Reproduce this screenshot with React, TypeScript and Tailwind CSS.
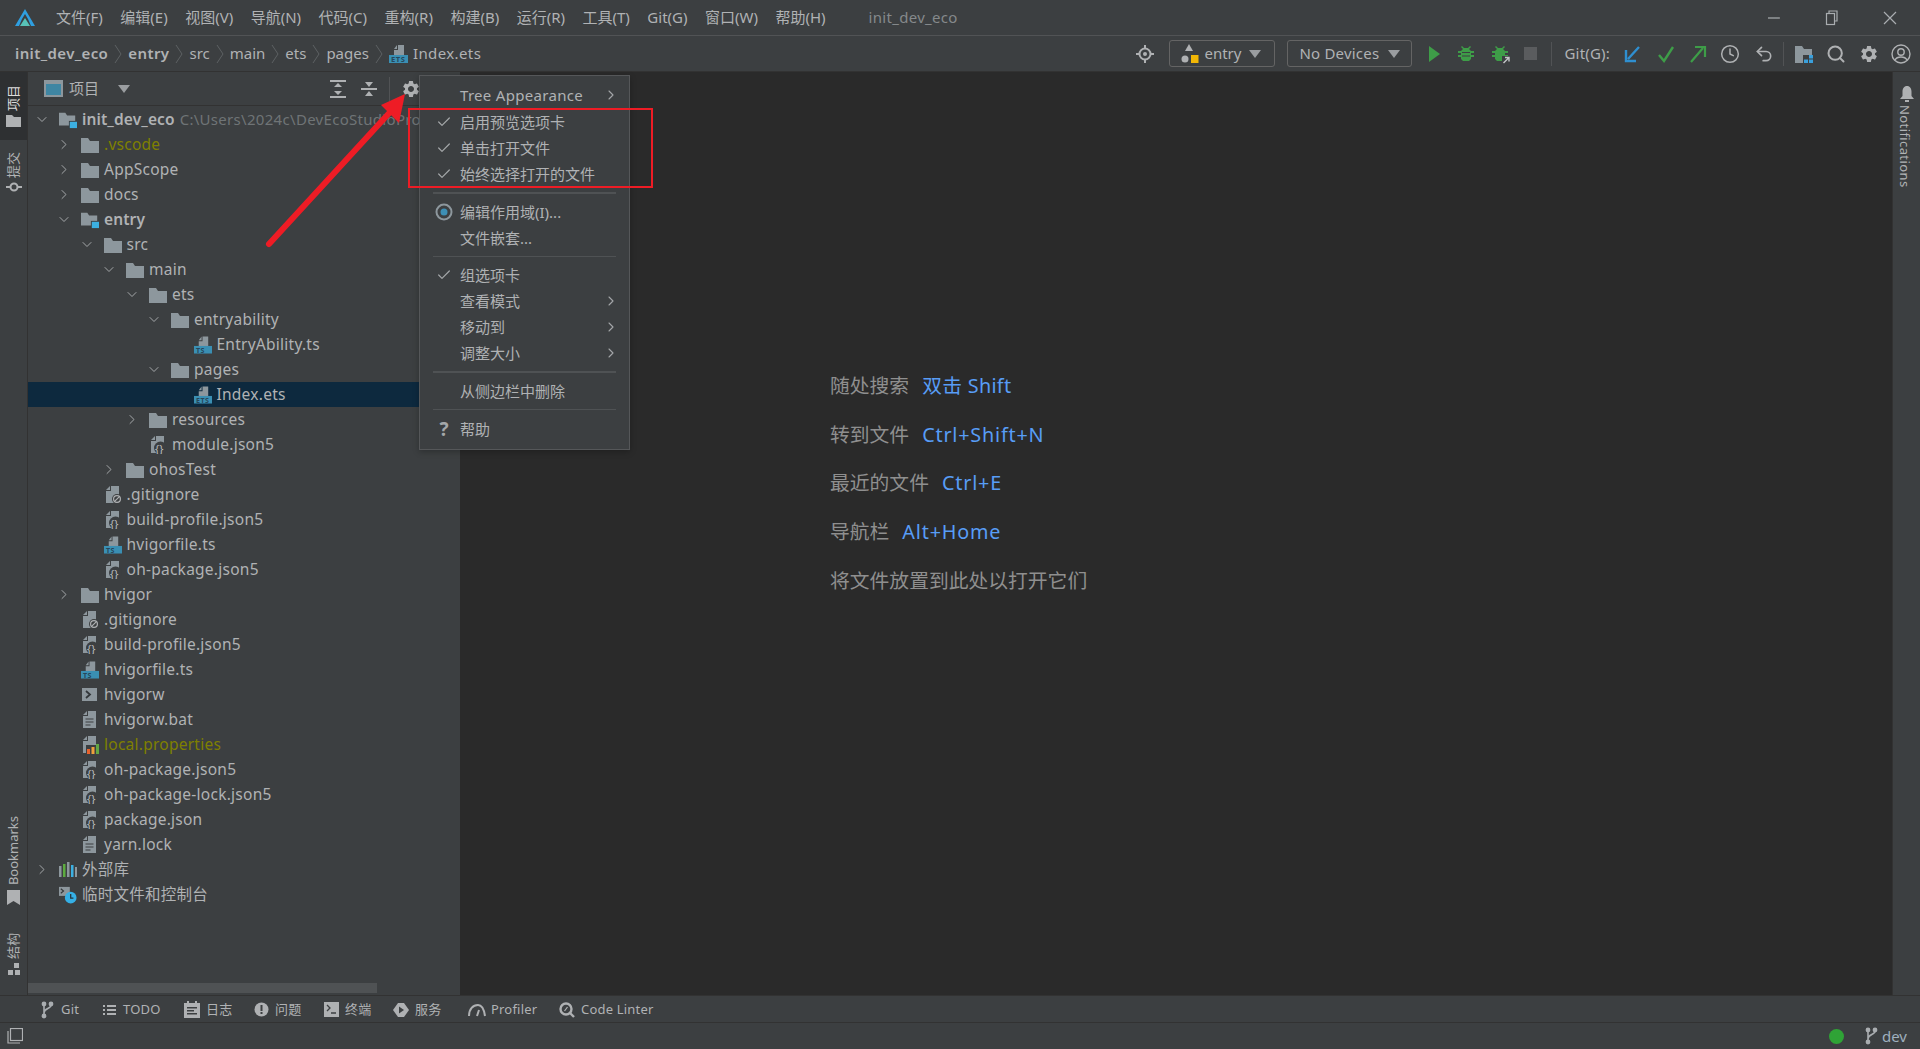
import { Check, ChevronDown, ChevronRight, Clock, Search, Undo2 } from 'lucide-react';
import { MdSettings } from 'react-icons/md';
import type { ReactNode } from 'react';

const FONT = "font-['Noto_Sans','Noto_Sans_CJK_SC',sans-serif]";
const GREY = '#8d979d';

const Folder = () => (
  <svg width="18" height="18" viewBox="0 0 18 18">
    <path d="M0 2h7l2 3h9v12H0z" fill={GREY} />
  </svg>
);

const ModuleFolder = () => (
  <svg width="20" height="18" viewBox="0 0 20 18">
    <path d="M0 1h7l2 3h9v11H0z" fill={GREY} />
    <rect x="11" y="10" width="9" height="8" fill="#3c3f41" />
    <rect x="12" y="11" width="8" height="7" fill="#3cb0e2" />
  </svg>
);

const FileBase = () => <path d="M7 0h8v17H2V5h5zM6 0v4H2z" fill={GREY} />;

const StripFile = ({ label }: { label: string }) => (
  <svg width="19" height="18" viewBox="0 0 19 18">
    <path d="M9 0h6v11H5V5h4zM8 0v4H5z" fill={GREY} />
    <rect x="0" y="10" width="19" height="8" fill="#3a8fb3" />
    <text x="2" y="17" fontSize="7.5" fontWeight="700" fontFamily="Noto Sans" fill="#27475a" letterSpacing="0.6">
      {label}
    </text>
  </svg>
);

const JsonFile = () => (
  <svg width="18" height="18" viewBox="0 0 18 18">
    <FileBase />
    <circle cx="11.500" cy="12" r="6.500" fill="#3c3f41" />
    <text x="6" y="16.500" fontSize="11" fontFamily="Noto Sans" fill="#b8babc">
      {'{}'}
    </text>
  </svg>
);

const IgnoreFile = () => (
  <svg width="18" height="18" viewBox="0 0 18 18">
    <FileBase />
    <circle cx="13" cy="13" r="5" fill="#3c3f41" />
    <circle cx="13" cy="13" r="3.4" fill="none" stroke="#afb1b3" strokeWidth="1.2" />
    <path d="M10.8 15.2l4.4-4.4" stroke="#afb1b3" strokeWidth="1.2" />
  </svg>
);

const TermFile = () => (
  <svg width="18" height="18" viewBox="0 0 18 18">
    <rect x="1" y="2" width="15" height="13" fill={GREY} />
    <path d="M5 5l4 3.5L5 12" fill="none" stroke="#33373a" strokeWidth="1.8" />
  </svg>
);

const TextFile = () => (
  <svg width="18" height="18" viewBox="0 0 18 18">
    <FileBase />
    <path d="M4.500 8h8M4.500 11h8M4.500 14h5" stroke="#3c3f41" strokeWidth="1.2" />
  </svg>
);

const PropsFile = () => (
  <svg width="18" height="18" viewBox="0 0 18 18">
    <FileBase />
    <rect x="5" y="9" width="13" height="9" fill="#3c3f41" />
    <rect x="6" y="13" width="3" height="5" fill="#e8622c" />
    <rect x="10.5" y="11" width="3" height="7" fill="#eda03c" />
    <rect x="15" y="8" width="3" height="10" fill="#62a744" />
  </svg>
);

const LibIcon = () => (
  <svg width="18" height="18" viewBox="0 0 18 18">
    <rect x="0" y="5" width="2.5" height="11" fill={GREY} />
    <rect x="4" y="3" width="2.5" height="13" fill="#5cab3f" />
    <rect x="8" y="1" width="2.5" height="15" fill={GREY} />
    <rect x="12" y="4" width="2.5" height="12" fill="#3cb0e2" />
    <rect x="16" y="6" width="2" height="10" fill={GREY} />
  </svg>
);

const ScratchIcon = () => (
  <svg width="20" height="20" viewBox="0 0 20 20">
    <rect x="0" y="1" width="12" height="10" fill={GREY} />
    <path d="M2 3l3 2.5L2 8" fill="none" stroke="#33373a" strokeWidth="1.3" />
    <circle cx="13" cy="13" r="6.5" fill="#35b0e6" />
    <path d="M13 9v4.5h3" fill="none" stroke="#26323a" strokeWidth="1.4" />
  </svg>
);

const BranchIcon = ({ className = '#a9adb0' }: { className?: string }) => (
  <svg width="14" height="18" viewBox="0 0 14 18" fill="none" stroke={className} strokeWidth="1.6">
    <path d="M4 3v12M11 4c0 4-7 3-7 8" />
    <circle cx="4" cy="3" r="1.6" fill={className} />
    <circle cx="11" cy="3" r="1.6" fill={className} />
    <circle cx="4" cy="15" r="1.6" fill={className} />
  </svg>
);

type Kind = 'folder' | 'module' | 'ts' | 'ets' | 'json' | 'ignore' | 'term' | 'text' | 'props' | 'lib' | 'scratch';

const ICONS: Record<Kind, ReactNode> = {
  folder: <Folder />,
  module: <ModuleFolder />,
  ts: <StripFile label="TS" />,
  ets: <StripFile label="ETS" />,
  json: <JsonFile />,
  ignore: <IgnoreFile />,
  term: <TermFile />,
  text: <TextFile />,
  props: <PropsFile />,
  lib: <LibIcon />,
  scratch: <ScratchIcon />,
};

const INDENT = ['pl-[6px]', 'pl-[28px]', 'pl-[50.5px]', 'pl-[73px]', 'pl-[96px]', 'pl-[118px]', 'pl-[140.5px]'];

type Row = {
  depth: number;
  kind: Kind;
  name: string;
  arrow?: 'open' | 'closed';
  tone?: string;
  selected?: boolean;
  path?: string;
};

const ROWS: Row[] = [
  { depth: 0, kind: 'module', name: 'init_dev_eco', arrow: 'open', tone: 'font-semibold tracking-[0.1px]', path: 'C:\\Users\\2024c\\DevEcoStudioProjects\\init_dev_eco' },
  { depth: 1, kind: 'folder', name: '.vscode', arrow: 'closed', tone: 'text-[#7f7f00]' },
  { depth: 1, kind: 'folder', name: 'AppScope', arrow: 'closed' },
  { depth: 1, kind: 'folder', name: 'docs', arrow: 'closed' },
  { depth: 1, kind: 'module', name: 'entry', arrow: 'open', tone: 'font-semibold tracking-[0.1px]' },
  { depth: 2, kind: 'folder', name: 'src', arrow: 'open' },
  { depth: 3, kind: 'folder', name: 'main', arrow: 'open' },
  { depth: 4, kind: 'folder', name: 'ets', arrow: 'open' },
  { depth: 5, kind: 'folder', name: 'entryability', arrow: 'open' },
  { depth: 6, kind: 'ts', name: 'EntryAbility.ts' },
  { depth: 5, kind: 'folder', name: 'pages', arrow: 'open' },
  { depth: 6, kind: 'ets', name: 'Index.ets', selected: true },
  { depth: 4, kind: 'folder', name: 'resources', arrow: 'closed' },
  { depth: 4, kind: 'json', name: 'module.json5' },
  { depth: 3, kind: 'folder', name: 'ohosTest', arrow: 'closed' },
  { depth: 2, kind: 'ignore', name: '.gitignore' },
  { depth: 2, kind: 'json', name: 'build-profile.json5' },
  { depth: 2, kind: 'ts', name: 'hvigorfile.ts' },
  { depth: 2, kind: 'json', name: 'oh-package.json5' },
  { depth: 1, kind: 'folder', name: 'hvigor', arrow: 'closed' },
  { depth: 1, kind: 'ignore', name: '.gitignore' },
  { depth: 1, kind: 'json', name: 'build-profile.json5' },
  { depth: 1, kind: 'ts', name: 'hvigorfile.ts' },
  { depth: 1, kind: 'term', name: 'hvigorw' },
  { depth: 1, kind: 'text', name: 'hvigorw.bat' },
  { depth: 1, kind: 'props', name: 'local.properties', tone: 'text-[#7f7f00]' },
  { depth: 1, kind: 'json', name: 'oh-package.json5' },
  { depth: 1, kind: 'json', name: 'oh-package-lock.json5' },
  { depth: 1, kind: 'json', name: 'package.json' },
  { depth: 1, kind: 'text', name: 'yarn.lock' },
  { depth: 0, kind: 'lib', name: '外部库', arrow: 'closed' },
  { depth: 0, kind: 'scratch', name: '临时文件和控制台' },
];

const TreeRow = ({ row }: { row: Row }) => (
  <div className={`flex h-[25px] items-center whitespace-nowrap ${INDENT[row.depth]} ${row.selected ? 'bg-[#0d293e]' : ''}`}>
    <span className="flex w-4 shrink-0 justify-center text-[#a4a7a9]">
      {row.arrow === 'open' && <ChevronDown size={17} strokeWidth={1.5} />}
      {row.arrow === 'closed' && <ChevronRight size={17} strokeWidth={1.5} />}
    </span>
    <span className="ml-[9px] flex w-[18px] shrink-0 items-center">{ICONS[row.kind]}</span>
    <span className={`ml-[5px] text-[15.5px] ${row.tone?.includes('tracking') ? '' : 'tracking-[0.25px]'} ${row.tone ?? ''}`}>{row.name}</span>
    {row.path && <span className="ml-[5px] tracking-[0.3px] text-[#6f7476]">{row.path}</span>}
  </div>
);

const MENUS = ['文件(F)', '编辑(E)', '视图(V)', '导航(N)', '代码(C)', '重构(R)', '构建(B)', '运行(R)', '工具(T)', 'Git(G)', '窗口(W)', '帮助(H)'];

const TitleBar = () => (
  <div className="flex h-[36px] items-center border-b border-[#515355] pl-[15px] pr-[23px]">
    <svg width="20" height="18" viewBox="0 0 20 18">
      <path d="M10 0l10 17h-6l-4-7-4 7H0z" fill="#2f9fe0" />
      <path d="M7 10l3-5 3 5 3 7H4z" fill="#3c3f41" />
      <path d="M10 9l5 8H5z" fill="#58c3b8" />
    </svg>
    <div className="ml-[21px] flex gap-[17.5px]">
      {MENUS.map((m) => (
        <span key={m} className="whitespace-nowrap">{m}</span>
      ))}
    </div>
    <span className="ml-[43px] text-[#85898b] tracking-[0.3px]">init_dev_eco</span>
    <div className="ml-auto flex items-center gap-[44px]">
      <svg width="14" height="14" viewBox="0 0 14 14"><path d="M1 7h12" stroke="#a9adb0" strokeWidth="1.2" /></svg>
      <svg width="14" height="16" viewBox="0 0 14 16" fill="none" stroke="#a9adb0" strokeWidth="1.2"><path d="M4 3V1h8v10h-2" /><rect x="1.5" y="3.5" width="8" height="11" /></svg>
      <svg width="14" height="14" viewBox="0 0 14 14"><path d="M1 1l12 12M13 1L1 13" stroke="#a9adb0" strokeWidth="1.2" /></svg>
    </div>
  </div>
);

const Crumb = ({ children, bold }: { children: ReactNode; bold?: boolean }) => (
  <>
    <span className={bold ? 'font-semibold tracking-[0.4px]' : ''}>{children}</span>
    <svg width="10" height="22" viewBox="0 0 10 22" className="mx-[5px]">
      <path d="M2 2l6 9-6 9" fill="none" stroke="#5d6163" strokeWidth="1" />
    </svg>
  </>
);

const Tri = () => (
  <svg width="12" height="8" viewBox="0 0 12 8"><path d="M0 0h12L6 8z" fill="#9a9da0" /></svg>
);

const Gear = ({ size = 20 }: { size?: number }) => <MdSettings size={size} color="#afb1b3" />;

const BugIcon = ({ attach }: { attach?: boolean }) => (
  <svg width="20" height="20" viewBox="0 0 20 20">
    <path d="M6 2l2 2h4l2-2 1 1-2 2 2 2h3v2h-3v2h3v2h-3v2l-2 2H7l-2-2v-2H2v-2h3V9H2V7h3l2-2-2-2z" fill="#3e9d48" />
    {!attach && <path d="M6 8.5h8M6 12h8" stroke="#3c3f41" strokeWidth="1.2" />}
    {attach && <path d="M12 12h8v8h-8z" fill="#3c3f41" />}
    {attach && <path d="M13.5 19l5-5M15 13.5h4v4" fill="none" stroke="#c4c6c8" strokeWidth="1.4" />}
  </svg>
);

const ArrowIcon = ({ dir }: { dir: 'in' | 'out' }) =>
  dir === 'in' ? (
    <svg width="20" height="20" viewBox="0 0 20 20" fill="none" stroke="#2f8fd0" strokeWidth="2.4">
      <path d="M17 3L6 15M4 6v11h10" />
    </svg>
  ) : (
    <svg width="20" height="20" viewBox="0 0 20 20" fill="none" stroke="#3e9d48" strokeWidth="2.2">
      <path d="M3 18L15 4M7 3h10v10" />
    </svg>
  );

const Breadcrumb = () => (
  <div className="flex h-[36px] items-center border-b border-[#323232] pl-[15px]">
    <Crumb bold>init_dev_eco</Crumb>
    <Crumb bold>entry</Crumb>
    <Crumb>src</Crumb>
    <Crumb>main</Crumb>
    <Crumb>ets</Crumb>
    <Crumb>pages</Crumb>
    <span className="flex items-center">
      <StripFile label="ETS" />
      <span className="ml-[5px] tracking-[0.4px]">Index.ets</span>
    </span>

    <div className="ml-auto flex items-center">
      <svg width="18" height="18" viewBox="0 0 18 18" fill="none" stroke="#afb1b3" strokeWidth="2">
        <circle cx="9" cy="9" r="5.5" />
        <circle cx="9" cy="9" r="2" fill="#afb1b3" stroke="none" />
        <path d="M9 0v3M9 15v3M0 9h3M15 9h3" />
      </svg>
      <div className="ml-[15px] flex h-[27px] w-[106px] items-center rounded-[3px] border border-[#646464] pl-[11px]">
        <svg width="18" height="20" viewBox="0 0 18 20">
          <path d="M8 0l4 7H4z" fill="#afb1b3" />
          <circle cx="4" cy="15" r="3.5" fill="#afb1b3" />
          <rect x="10" y="11" width="7.5" height="8" fill="#f2b705" />
        </svg>
        <span className="ml-[5px]">entry</span>
        <span className="ml-[8px]"><Tri /></span>
      </div>
      <div className="ml-[12px] flex h-[27px] w-[125px] items-center rounded-[3px] border border-[#646464] pl-[11px]">
        <span className="whitespace-nowrap tracking-[0.2px]">No Devices</span>
        <span className="ml-[9px]"><Tri /></span>
      </div>
      <svg className="ml-[12px]" width="20" height="20" viewBox="0 0 20 20"><path d="M5 2l11 8-11 8z" fill="#3e9d48" /></svg>
      <span className="ml-[12px]"><BugIcon /></span>
      <span className="ml-[14px]"><BugIcon attach /></span>
      <svg className="ml-[11px]" width="20" height="20" viewBox="0 0 20 20"><rect x="3" y="3" width="13" height="13" fill="#5a5c5e" /></svg>
      <span className="ml-[10px] h-[24px] w-px bg-[#515355]" />
      <span className="ml-[12px] whitespace-nowrap tracking-[0.2px]">Git(G):</span>
      <span className="ml-[12px]"><ArrowIcon dir="in" /></span>
      <svg className="ml-[14px]" width="20" height="20" viewBox="0 0 20 20" fill="none" stroke="#3e9d48" strokeWidth="2.4"><path d="M3 11l5 6L17 3" /></svg>
      <span className="ml-[12px]"><ArrowIcon dir="out" /></span>
      <Clock className="ml-[12px]" size={20} color="#afb1b3" strokeWidth={1.8} />
      <Undo2 className="ml-[14px]" size={20} color="#afb1b3" strokeWidth={2} />
      <span className="ml-[9px] h-[24px] w-px bg-[#515355]" />
      <svg className="ml-[10px]" width="20" height="20" viewBox="0 0 20 20">
        <path d="M1 2h7l2 3h8v14H1z" fill={GREY} />
        <rect x="9" y="11" width="11" height="9" fill="#3c3f41" />
        <rect x="15" y="11" width="4" height="3.5" fill="#3aa0dc" />
        <rect x="10" y="15.5" width="4" height="3.5" fill="#3aa0dc" />
        <rect x="15" y="15.5" width="4" height="3.5" fill="#3aa0dc" />
      </svg>
      <Search className="ml-[12px]" size={20} color="#afb1b3" strokeWidth={2.4} />
      <span className="ml-[13px]"><Gear /></span>
      <svg className="ml-[12px] mr-[9px]" width="20" height="20" viewBox="0 0 20 20" fill="none" stroke="#afb1b3" strokeWidth="1.4">
        <circle cx="10" cy="10" r="9" />
        <circle cx="10" cy="8" r="3.2" />
        <path d="M4 16c2-4 10-4 12 0" />
      </svg>
    </div>
  </div>
);

const SIDE_TEXT = 'rotate-180 [writing-mode:vertical-rl] [text-orientation:sideways]';

const LeftStripe = () => (
  <div className="flex w-[28px] shrink-0 flex-col justify-between border-r border-[#323232] text-[13px]">
    <div>
      <div className="flex h-[68px] flex-col items-center justify-center gap-[3px] bg-[#2e3032] text-[#dcdcdc]">
        <span className={SIDE_TEXT}>项目</span>
        <svg width="15" height="13" viewBox="0 0 15 13"><path d="M0 1h6l2 2h7v10H0z" fill="#afb1b3" /></svg>
      </div>
      <div className="mt-[12px] flex flex-col items-center gap-[3px]">
        <span className={SIDE_TEXT}>提交</span>
        <svg width="16" height="12" viewBox="0 0 16 12" fill="none" stroke="#afb1b3" strokeWidth="2">
          <circle cx="8" cy="6" r="3.5" />
          <path d="M0 6h4M12 6h4" />
        </svg>
      </div>
    </div>
    <div className="mb-[19px] flex flex-col items-center">
      <span className={SIDE_TEXT}>Bookmarks</span>
      <svg className="mt-[5px]" width="13" height="15" viewBox="0 0 13 15"><path d="M0 0h13v15l-6.5-4L0 15z" fill="#afb1b3" /></svg>
      <span className={`mt-[28px] ${SIDE_TEXT}`}>结构</span>
      <svg className="mt-[4px]" width="14" height="13" viewBox="0 0 14 13" fill="#afb1b3">
        <rect x="7" y="0" width="5" height="5" />
        <rect x="1" y="7" width="5" height="5" />
        <rect x="8" y="7" width="5" height="5" />
      </svg>
    </div>
  </div>
);

const Sidebar = () => (
  <div className="relative w-[432px] shrink-0 overflow-hidden">
    <div className="flex h-[34px] items-center border-b border-[#323232] pl-[16px]">
      <svg width="19" height="17" viewBox="0 0 19 17">
        <rect x="0" y="0" width="19" height="17" fill="#8d979d" />
        <rect x="2" y="4" width="15" height="11" fill="#3f86a3" />
      </svg>
      <span className="ml-[6px]">项目</span>
      <svg className="ml-[19px]" width="12" height="8" viewBox="0 0 12 8"><path d="M0 0h12L6 8z" fill="#9a9da0" /></svg>
      <svg className="ml-[200px]" width="16" height="18" viewBox="0 0 16 18" fill="#afb1b3">
        <rect x="0" y="0" width="16" height="2" />
        <rect x="0" y="16" width="16" height="2" />
        <path d="M8 3l4 4H4zM8 15l-4-4h8z" />
      </svg>
      <svg className="ml-[15px]" width="16" height="16" viewBox="0 0 16 16" fill="#afb1b3">
        <rect x="0" y="7" width="16" height="2" />
        <path d="M8 6L4 1h8zM8 10l4 5H4z" />
      </svg>
      <span className="ml-[12px] h-[24px] w-px bg-[#515355]" />
      <span className="ml-[11px] flex"><Gear size={20} /></span>
    </div>
    <div className="pt-px">
      {ROWS.map((r, i) => (
        <TreeRow key={i} row={r} />
      ))}
    </div>
    <div className="absolute bottom-[2px] left-0 h-[10px] w-[349px] bg-[#4f5254]" />
  </div>
);

const HINTS = [
  ['随处搜索', '双击 Shift', 'tracking-[0.3px]'],
  ['转到文件', 'Ctrl+Shift+N', 'tracking-[0.8px]'],
  ['最近的文件', 'Ctrl+E', 'tracking-[0.8px]'],
  ['导航栏', 'Alt+Home', 'tracking-[0.8px]'],
  ['将文件放置到此处以打开它们', '', ''],
];

const Editor = () => (
  <div className="flex flex-1 flex-col gap-[18.7px] bg-[#2a2a2a] pl-[370px] pt-[299px] text-[19.8px] leading-[30px] text-[#8f8f8f]">
    {HINTS.map(([label, keys, spacing]) => (
      <div key={label} className="flex gap-[13px]">
        <span>{label}</span>
        {keys && <span className={`text-[#589df6] ${spacing}`}>{keys}</span>}
      </div>
    ))}
  </div>
);

const RightStripe = () => (
  <div className="flex w-[28px] shrink-0 flex-col items-center border-l border-[#323232] pt-[14px]">
    <svg width="14" height="16" viewBox="0 0 14 16" fill="#afb1b3">
      <path d="M7 0c3 0 4.5 2.5 4.5 5.5V10L14 13H0l2.5-3V5.5C2.5 2.500 4 0 7 0z" />
      <rect x="5" y="14" width="4" height="2" />
    </svg>
    <span className="mr-[4px] mt-[3px] text-[13px] tracking-[0.4px] [writing-mode:vertical-rl]">Notifications</span>
  </div>
);

const TOOLS: { label: string; width: string; icon: ReactNode }[] = [
  { label: 'Git', width: 'w-[62px]', icon: <BranchIcon /> },
  {
    label: 'TODO',
    width: 'w-[83px]',
    icon: (
      <svg width="14" height="14" viewBox="0 0 14 14" fill="#afb1b3">
        <path d="M1 2h2v2H1zM5 2h9v2H5zM1 6h2v2H1zM5 6h9v2H5zM1 10h2v2H1zM5 10h9v2H5z" />
      </svg>
    ),
  },
  {
    label: '日志',
    width: 'w-[69px]',
    icon: (
      <svg width="16" height="17" viewBox="0 0 16 17" fill="#afb1b3">
        <path d="M0 2h3V0h2v2h6V0h2v2h3v15H0zM3 6v1.500h10V6zM3 9v1.500h7V9zM3 12v1.500h10V12z" fillRule="evenodd" />
      </svg>
    ),
  },
  {
    label: '问题',
    width: 'w-[70px]',
    icon: (
      <svg width="15" height="15" viewBox="0 0 15 15">
        <circle cx="7.500" cy="7.500" r="7" fill="#afb1b3" />
        <path d="M6.500 3h2v6h-2zM6.500 10h2v2h-2z" fill="#3c3f41" />
      </svg>
    ),
  },
  {
    label: '终端',
    width: 'w-[70px]',
    icon: (
      <svg width="15" height="15" viewBox="0 0 15 15">
        <rect width="15" height="15" fill="#afb1b3" />
        <path d="M3 3l3 3-3 3M7 11h5" fill="none" stroke="#3c3f41" strokeWidth="1.3" />
      </svg>
    ),
  },
  {
    label: '服务',
    width: 'w-[76px]',
    icon: (
      <svg width="16" height="16" viewBox="0 0 16 16">
        <path d="M5 1h6l5 7-5 7H5L0 8z" fill="#afb1b3" />
        <path d="M6 4.500l5 3.500-5 3.500z" fill="#3c3f41" />
      </svg>
    ),
  },
  {
    label: 'Profiler',
    width: 'w-[90px]',
    icon: (
      <svg className="shrink-0" width="20" height="14" viewBox="0 0 20 14" fill="none" stroke="#afb1b3" strokeWidth="2">
        <path d="M2 13C2 6 6 2 11 2c4 0 6 4 7 11M10 13l2-6" />
      </svg>
    ),
  },
  {
    label: 'Code Linter',
    width: 'w-[100px]',
    icon: (
      <svg width="16" height="16" viewBox="0 0 16 16" fill="none" stroke="#afb1b3" strokeWidth="2.4">
        <circle cx="7" cy="7" r="5.500" />
        <path d="M11 11l4 4" />
        <path d="M5.500 9l3-4" strokeWidth="1.2" />
      </svg>
    ),
  },
];

const ToolStrip = () => (
  <div className="flex h-[28px] items-center border-y border-[#323232] pl-[39px] pt-px text-[13px] tracking-[0.2px]">
    {TOOLS.map((t) => (
      <div key={t.label} className={`flex shrink-0 items-center ${t.width}`}>
        <span className="flex w-4 shrink-0 justify-center">{t.icon}</span>
        <span className="ml-[6px] whitespace-nowrap">{t.label}</span>
      </div>
    ))}
  </div>
);

const StatusBar = () => (
  <div className="flex h-[26px] items-center pl-[7px] pr-[13px]">
    <svg width="16" height="16" viewBox="0 0 16 16" fill="none" stroke="#afb1b3" strokeWidth="1.2">
      <rect x="3.500" y="0.500" width="12" height="12" />
      <path d="M1 3v12h12" />
    </svg>
    <span className="ml-auto h-[15px] w-[15px] rounded-full bg-[#2fa336]" />
    <span className="ml-[20px]"><BranchIcon /></span>
    <span className="ml-[4px] text-[#9fb0bf]">dev</span>
  </div>
);

type MenuItem =
  | { sep: string }
  | { label: string; check?: boolean; sub?: boolean; icon?: 'radio' | 'help'; extra?: string };

const MENU_ITEMS: MenuItem[] = [
  { label: 'Tree Appearance', sub: true, extra: 'mb-px tracking-[0.3px]' },
  { label: '启用预览选项卡', check: true },
  { label: '单击打开文件', check: true },
  { label: '始终选择打开的文件', check: true },
  { sep: 'h-[2px] mt-[5px] mb-[5px]' },
  { label: '编辑作用域(I)...', icon: 'radio' },
  { label: '文件嵌套...' },
  { sep: 'h-px mt-[5px] mb-[5px]' },
  { label: '组选项卡', check: true },
  { label: '查看模式', sub: true },
  { label: '移动到', sub: true },
  { label: '调整大小', sub: true },
  { sep: 'h-[2px] mt-[5px] mb-[5px]' },
  { label: '从侧边栏中删除' },
  { sep: 'h-px mt-[5px] mb-[6px]' },
  { label: '帮助', icon: 'help' },
];

const PopupMenu = () => (
  <div className="absolute left-[419px] top-[75px] w-[211px] border border-[#555759] bg-[#3c3f41] pb-[7px] pt-[6px] shadow-[0_2px_6px_rgba(0,0,0,0.25)]">
    {MENU_ITEMS.map((item, i) =>
      'sep' in item ? (
        <div key={i} className={`mx-[13px] bg-[#4f5254] ${item.sep}`} />
      ) : (
        <div key={i} className={`flex h-[26px] items-center pl-[14px] pr-[10px] ${item.extra ?? ''}`}>
          <span className="flex w-[20px] shrink-0 justify-center text-[#a4a7a9]">
            {item.check && <Check size={16} strokeWidth={1.8} />}
            {item.icon === 'radio' && (
              <svg width="18" height="18" viewBox="0 0 18 18">
                <circle cx="9" cy="9" r="7.500" fill="none" stroke="#8d979d" strokeWidth="2" />
                <circle cx="9" cy="9" r="3.500" fill="#3d8fb5" />
              </svg>
            )}
            {item.icon === 'help' && <span className="text-[19px] font-bold leading-none">?</span>}
          </span>
          <span className="ml-[6px] whitespace-nowrap">{item.label}</span>
          {item.sub && <ChevronRight className="ml-auto text-[#a4a7a9]" size={16} strokeWidth={1.6} />}
        </div>
      ),
    )}
  </div>
);

// red annotation on top of the screenshot
const Annotation = () => (
  <>
    <div className="absolute left-[408px] top-[108px] h-[80px] w-[245px] border-2 border-[#ee1c25]" />
    <svg className="absolute left-0 top-0" width="460" height="260" viewBox="0 0 460 260">
      <path d="M269 244L392 110" stroke="#ee1c25" strokeWidth="6" strokeLinecap="round" />
      <path d="M405 94L381 105L399 123z" fill="#ee1c25" />
    </svg>
  </>
);

export default function App() {
  return (
    <div className={`relative flex h-[1049px] w-[1920px] flex-col overflow-hidden bg-[#3c3f41] text-[15px] text-[#b0b2b4] ${FONT}`}>
      <TitleBar />
      <Breadcrumb />
      <div className="flex min-h-0 flex-1">
        <LeftStripe />
        <Sidebar />
        <Editor />
        <RightStripe />
      </div>
      <ToolStrip />
      <StatusBar />
      <PopupMenu />
      <Annotation />
    </div>
  );
}
